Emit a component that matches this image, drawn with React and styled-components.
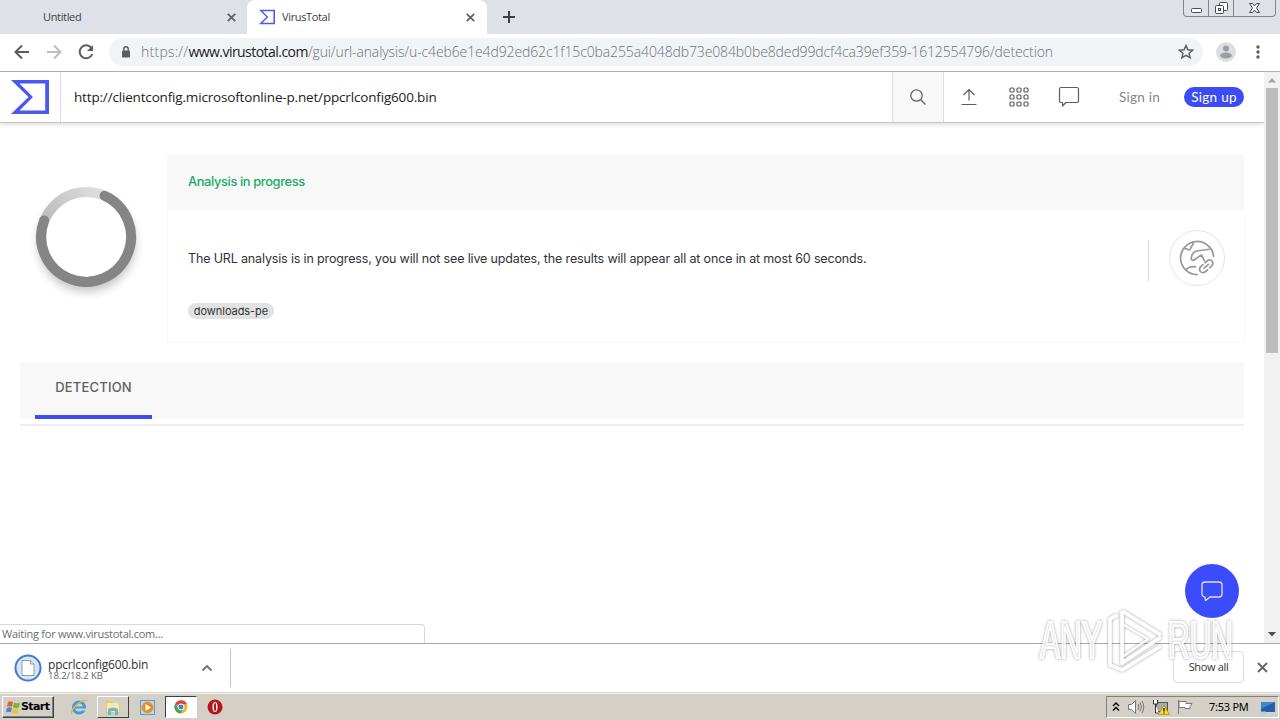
import styled, { createGlobalStyle } from 'styled-components';

const GlobalStyle = createGlobalStyle`
    * { box-sizing: border-box; }
    body {
        margin: 0;
        overflow: hidden;
        background: #fff;
        font-family: 'Open Sans', 'Noto Sans', sans-serif;
    }
    svg { display: block; flex: none; }
`

const Screen = styled.div`
    width: 1280px;
    height: 720px;
    display: flex;
    flex-direction: column;
    position: relative;
    overflow: hidden;
`

const Label = styled.span`
    font-family: ${props => props.$font || "'Open Sans', sans-serif"};
    font-size: ${props => props.$size}px;
    font-weight: ${props => props.$weight || 400};
    letter-spacing: ${props => props.$track || 0}px;
    color: ${props => props.$color || '#333'};
    line-height: ${props => props.$line || 16}px;
    margin-left: ${props => props.$indent || 0}px;
    white-space: pre;
`

/* browser chrome */

const TabStrip = styled.div`
    height: 34px;
    flex: none;
    display: flex;
    background: #dee1e8;
`

const Tab = styled.div`
    display: flex;
    align-items: center;
    width: ${props => props.$width}px;
    padding: 0 ${props => props.$right}px 0 ${props => props.$left}px;
    background: ${props => props.$active ? '#fff' : 'transparent'};
    border-radius: 8px 8px 0 0;

    & > :last-child { margin-left: auto; }
`

const NewTab = styled.div`
    display: flex;
    align-items: center;
    padding-left: 16px;
`

const WindowButtons = styled.div`
    display: flex;
    height: 17px;
    margin-left: auto;
    margin-right: 4px;
    border: 1px solid #80858f;
    border-top: 0;
    border-radius: 0 0 4px 4px;
`

const WindowButton = styled.div`
    width: ${props => props.$width}px;
    display: flex;
    justify-content: center;
    border-left: ${props => props.$first ? '0' : '1px solid #80858f'};
`

const Toolbar = styled.div`
    height: 38px;
    flex: none;
    display: flex;
    align-items: center;
    padding: 0 11px 2px 12px;
    border-bottom: 1px solid #afb1b0;
    background: #fff;
`

const NavButtons = styled.div`
    display: flex;
    gap: 12px;
    width: 97px;
`

const Omnibox = styled.div`
    width: 1094px;
    height: 28px;
    display: flex;
    align-items: center;
    padding: 0 9px 0 11px;
    border-radius: 14px;
    background: #f1f4f7;

    & > :last-child { margin-left: auto; }
`

const Address = styled.div`
    margin-left: 9px;
    padding-bottom: 1px;
    white-space: nowrap;
`

const ToolbarEnd = styled.div`
    display: flex;
    align-items: center;
    gap: 13px;
    margin-left: auto;
`

/* page */

const Viewport = styled.div`
    height: 571px;
    flex: none;
    display: flex;
    position: relative;
`

const Page = styled.div`
    width: 1264px;
    background: #fff;
`

const Header = styled.header`
    height: 51px;
    display: flex;
    align-items: center;
    border-bottom: 1px solid #c6c6c6;
    box-shadow: 0 2px 4px rgba(0, 0, 0, 0.12);
`

const LogoCell = styled.div`
    width: 61px;
    height: 50px;
    padding: 8px 0 0 11px;
    border-right: 1px solid #dedede;
`

const Query = styled.div`
    flex: 1;
    padding: 0 0 2px 13px;
`

const SearchCell = styled.div`
    width: 52px;
    height: 50px;
    display: flex;
    align-items: center;
    justify-content: center;
    background: #f8f8f8;
    border: solid #dedede;
    border-width: 0 1px;
`

const HeaderIcons = styled.div`
    display: flex;
    gap: 26px;
    padding-left: 13px;
`

const Account = styled.div`
    display: flex;
    align-items: center;
    justify-content: space-between;
    width: 126px;
    margin-left: 37px;
    margin-right: 20px;
`

const SignUp = styled.div`
    display: flex;
    align-items: center;
    justify-content: center;
    width: 60px;
    height: 20px;
    border-radius: 10px;
    background: #3b4cf5;
`

const Summary = styled.section`
    display: flex;
    padding: 31px 19px 0 26px;
`

const SpinnerBox = styled.div`
    width: 141px;
    height: 160px;
    padding-top: 23px;
`

const Card = styled.div`
    flex: 1;
    height: 189px;
    border: 1px solid #fafafa;
`

const CardTitle = styled.div`
    height: 56px;
    display: flex;
    align-items: center;
    padding: 0 0 1px 20px;
    margin-top: -1px;
    background: #f8f8f8;
`

const CardBody = styled.div`
    display: flex;
    align-items: center;
    height: 96px;
    padding: 0 19px 0 20px;
`

const CardText = styled.div`
    display: flex;
    padding-top: 2px;
`

const Divider = styled.div`
    width: 1px;
    height: 41px;
    margin: 5px 20px 0 auto;
    background: #dadada;
`

const TypeIcon = styled.div`
    width: 56px;
    height: 56px;
    display: flex;
    align-items: center;
    justify-content: center;
    border: 1px solid #e4e4e4;
    border-radius: 50%;
`

const Tag = styled.div`
    display: flex;
    align-items: center;
    justify-content: center;
    width: 86px;
    height: 16px;
    margin: -3px 0 0 20px;
    border-radius: 8px;
    background: #e2e2e2;
`

const Tabs = styled.div`
    height: 64px;
    margin: 19px 20px 0;
    border-bottom: 2px solid #ededed;
    background: linear-gradient(#f8f8f8 57px, #fff 57px);
`

const DetectionTab = styled.div`
    width: 117px;
    height: 57px;
    margin-left: 15px;
    padding-top: 13px;
    text-align: center;
    border-bottom: 4px solid #3f4bf3;
`

const Scrollbar = styled.div`
    width: 16px;
    display: flex;
    flex-direction: column;
    align-items: center;
    justify-content: space-between;
    padding: 6px 0;
    background: #f1f1f1;
`

const Thumb = styled.div`
    width: 12px;
    height: 265px;
    margin: 5px 0 auto;
    background: #bdbdbd;
`

const ChatButton = styled.div`
    position: absolute;
    right: 41px;
    top: 492px;
    width: 54px;
    height: 54px;
    display: flex;
    align-items: center;
    justify-content: center;
    border-radius: 50%;
    background: #3b4cff;
`

const StatusBubble = styled.div`
    position: absolute;
    left: 0;
    bottom: 0;
    width: 425px;
    height: 19px;
    padding-left: 2px;
    display: flex;
    align-items: center;
    background: #fff;
    border: 1px solid #d8d8d8;
    border-width: 1px 1px 0 0;
    border-radius: 0 4px 0 0;
`

/* download shelf */

const Shelf = styled.div`
    height: 49px;
    flex: none;
    display: flex;
    align-items: center;
    padding-right: 12px;
    border-top: 1px solid #a9a9a9;
    background: #fff;
`

const Download = styled.div`
    width: 231px;
    height: 38px;
    display: flex;
    align-items: center;
    padding: 0 17px 0 14px;
    border-right: 1px solid #c4c4c4;

    & > :last-child { margin-left: auto; }
`

const FileText = styled.div`
    display: flex;
    flex-direction: column;
    margin-left: 6px;
    padding-top: 3px;
`

const ShowAll = styled.div`
    display: flex;
    align-items: center;
    justify-content: center;
    width: 71px;
    height: 32px;
    margin-left: auto;
    margin-right: 13px;
    margin-bottom: 2px;
    border: 1px solid #dadce0;
    border-radius: 4px;
`

const CloseShelf = styled.div`
    padding-bottom: 2px;
`

/* taskbar */

const Taskbar = styled.div`
    height: 28px;
    flex: none;
    display: flex;
    align-items: center;
    padding: 1px 0 0 2px;
    background: #d4d0c8;
    border-top: 1px solid #d4d0c8;
    box-shadow: inset 0 1px #f7f6f3;
`

const Start = styled.div`
    width: 52px;
    height: 22px;
    display: flex;
    align-items: center;
    padding-left: 2px;
    border: 1px solid;
    border-color: #fff #404040 #404040 #fff;
    box-shadow: inset -1px -1px #808080;
`

const TaskButton = styled.div`
    width: 32px;
    height: 22px;
    display: flex;
    align-items: center;
    justify-content: center;
    border: ${props => props.$state ? '1px solid' : '0'};
    border-color: ${props => props.$state === 'pressed' ? '#404040 #fff #fff #404040' : '#fff #404040 #404040 #fff'};
    background: ${props => props.$state === 'pressed' ? '#fff' : 'transparent'};
`

const TaskList = styled.div`
    display: flex;
    gap: 2px;
    margin-left: 9px;
`

const Tray = styled.div`
    height: 22px;
    width: 173px;
    display: flex;
    align-items: center;
    gap: 7px;
    margin-left: auto;
    margin-right: 1px;
    padding: 0 2px 0 5px;
    border: 1px solid;
    border-color: #808080 #fff #fff #808080;

    & > :last-child { margin-left: auto; }
`

const Watermark = styled.div`
    position: absolute;
    left: 1034px;
    top: 604px;
`

const Cross = ({ size = 9, color = '#5f6368', width = 1.8 }) => (
    <svg width={size} height={size} viewBox="0 0 9 9" stroke={color} strokeWidth={width}>
        <path d="M.8.8l7.4 7.4M8.2.8L.8 8.2" />
    </svg>
)

const Sigma = ({ width, height, color }) => (
    <svg width={width} height={height} viewBox="0 0 38 34" fill={color}>
        <path fillRule="evenodd" d="M0 0h38v34H0l17.500-17zM8.500 3.400L22 17 8.500 30.600h25.700V3.400z" />
    </svg>
)

const Spinner = () => (
    <svg width="120" height="130" viewBox="-.5 0 120 130" fill="none">
        <defs>
            <filter id="soft" x="-20%" y="-20%" width="140%" height="140%">
                <feGaussianBlur stdDeviation="5" />
            </filter>
            <linearGradient id="track" gradientUnits="userSpaceOnUse" x1="18" y1="40" x2="70" y2="10">
                <stop offset="0" stopColor="#bdbdbd" />
                <stop offset="1" stopColor="#dedede" />
            </linearGradient>
        </defs>
        <circle cx="60" cy="66" r="49" fill="#000" opacity=".22" filter="url(#soft)" />
        <circle cx="60" cy="60" r="45" fill="#fff" stroke="url(#track)" strokeWidth="10" />
        <path d="M78 18.800A45 45 0 1 1 17.600 43.500" stroke="#858585" strokeWidth="10" strokeLinecap="round" />
    </svg>
)

const GlobeLink = () => (
    <svg width="36" height="36" viewBox="0 0 37 37" fill="none" stroke="#9a9a9a" strokeWidth="1.8" strokeLinecap="round" strokeLinejoin="round">
        <path d="M18.500 35.500A17 17 0 1 1 35.500 16.500" />
        <path d="M5.500 8.500c3 0 3 2 5 1.500s1.500-3 3-4 1-2 .5-3.500M31 9.500l-13 1.800c-3 .6-5.500 4.700-5.500 7.700 0 2 2 2.500 4 .8l6.500-4.500 3 6M7 31c2-3 5-4 10-3.500" />
        <g transform="rotate(-42 28 27)">
            <path d="M26.500 30.500h-3a3.500 3.500 0 0 1 0-7h3M29.500 23.500h3a3.500 3.500 0 0 1 0 7h-3M25 27h6" />
        </g>
    </svg>
)

const AnyRun = () => (
    <svg width="204" height="74" viewBox="0 0 204 74" fill="none" opacity=".9">
        <defs>
            <filter id="glow" x="-10%" y="-10%" width="120%" height="120%">
                <feDropShadow dx="0" dy="0" stdDeviation="1.8" floodColor="#666" floodOpacity=".75" />
            </filter>
        </defs>
        <g filter="url(#glow)">
            <g fontFamily="Liberation Sans, sans-serif" fontSize="51" fill="#fff" fillOpacity=".6" stroke="#fff" strokeWidth="2.200">
                <text x="6" y="54" textLength="62" lengthAdjust="spacingAndGlyphs">ANY</text>
                <text x="134" y="54" textLength="65" lengthAdjust="spacingAndGlyphs">RUN</text>
            </g>
            <g stroke="#fff" strokeWidth="3.500" strokeLinejoin="round">
                <path d="M88 7l39 24M88 7v52l39-26" />
                <path d="M88 20l26 15-26 18z" strokeWidth="2" />
                <path d="M83 11l-7 4v46l12 5 39-24" />
            </g>
        </g>
    </svg>
)

export default function App() {
    return (
        <>
            <GlobalStyle />
            <Screen>
                <TabStrip>
                    <Tab $width={247} $left={43} $right={11}>
                        <Label $size={11} $track={-0.35} $color="#3c4043">Untitled</Label>
                        <Cross />
                    </Tab>
                    <Tab $width={240} $left={12} $right={12} $active>
                        <Sigma width={16} height={16} color="#4d5bea" />
                        <Label $size={11} $track={-0.35} $indent={7} $color="#3c4043">VirusTotal</Label>
                        <Cross />
                    </Tab>
                    <NewTab>
                        <svg width="12" height="12" stroke="#3c4043" strokeWidth="2"><path d="M6 0v12M0 6h12" /></svg>
                    </NewTab>
                    <WindowButtons>
                        <WindowButton $width={24} $first>
                            <svg width="13" height="16" fill="#fff" stroke="#454b56"><rect x="1.500" y="8.500" width="10" height="4" rx="1" /></svg>
                        </WindowButton>
                        <WindowButton $width={25}>
                            <svg width="13" height="16" fill="#fff" stroke="#454b56">
                                <rect x="4.500" y="2.500" width="8" height="8" rx="1" />
                                <rect x=".5" y="5.500" width="8" height="8" rx="1" />
                                <rect x="3.500" y="8.500" width="2" height="2" />
                            </svg>
                        </WindowButton>
                        <WindowButton $width={42}>
                            <svg width="13" height="16" viewBox="0 0 13 16" fill="#fff" stroke="#454b56">
                                <path d="M1.500 3.500h3l2 2.500 2-2.500h3L8.500 8l3 4.500h-3l-2-2.500-2 2.500h-3l3-4.500z" />
                            </svg>
                        </WindowButton>
                    </WindowButtons>
                </TabStrip>

                <Toolbar>
                    <NavButtons>
                        <svg width="20" height="20" fill="none" stroke="#5a5e62" strokeWidth="2"><path d="M17 10H4.500M10 3.500L3.500 10l6.500 6.500" /></svg>
                        <svg width="20" height="20" fill="none" stroke="#bdbdbd" strokeWidth="2"><path d="M3 10h12.500M10 3.500l6.500 6.500-6.500 6.500" /></svg>
                        <svg width="20" height="20" fill="none" stroke="#5a5e62" strokeWidth="2">
                            <path d="M15.500 6A6.500 6.500 0 1 0 16.300 12" />
                            <path d="M17 3v6h-6z" fill="#5a5e62" stroke="none" />
                        </svg>
                    </NavButtons>
                    <Omnibox>
                        <svg width="12" height="14" fill="none">
                            <rect x="2" y="5.500" width="8" height="7" rx="1" fill="#5a5e62" />
                            <path d="M3.800 6V4a2.200 2.200 0 0 1 4.400 0v2" stroke="#5a5e62" strokeWidth="1.400" />
                        </svg>
                        <Address>
                            <Label $size={14} $weight={300} $track={0.25} $color="#6c7277">https://</Label>
                            <Label $size={14} $track={-0.54} $color="#202124">www.virustotal.com</Label>
                            <Label $size={14} $weight={300} $track={-0.12} $color="#6c7277">/gui/url-analysis/u-c4eb6e1e4d92ed62c1f15c0ba255a4048db73e084b0be8ded99dcf4ca39ef359-1612554796/detection</Label>
                        </Address>
                        <svg width="16" height="16" viewBox="0 0 16 16" fill="none" stroke="#5a5e62" strokeWidth="1.500">
                            <path d="M8 1.500l1.900 4.300 4.700.4-3.500 3.100 1 4.500L8 11.400l-4.100 2.400 1-4.500-3.500-3.100 4.700-.4z" />
                        </svg>
                    </Omnibox>
                    <ToolbarEnd>
                        <svg width="20" height="20">
                            <circle cx="10" cy="10" r="10" fill="#dcdee1" />
                            <circle cx="10" cy="6.500" r="3" fill="#9a9da1" />
                            <ellipse cx="10" cy="13.500" rx="5.800" ry="3" fill="#9a9da1" />
                        </svg>
                        <svg width="20" height="16" fill="#5a5e62">
                            <circle cx="9" cy="3" r="1.700" /><circle cx="9" cy="8" r="1.700" /><circle cx="9" cy="13" r="1.700" />
                        </svg>
                    </ToolbarEnd>
                </Toolbar>

                <Viewport>
                    <Page>
                        <Header>
                            <LogoCell><Sigma width={38} height={34} color="#4958ee" /></LogoCell>
                            <Query><Label $size={13.5} $track={-0.17} $color="#222">http://clientconfig.microsoftonline-p.net/ppcrlconfig600.bin</Label></Query>
                            <SearchCell>
                                <svg width="16" height="16" fill="none" stroke="#666" strokeWidth="1.300"><circle cx="6.500" cy="6.500" r="5.700" /><path d="M10.700 10.700l4.800 4.800" /></svg>
                            </SearchCell>
                            <HeaderIcons>
                                <svg width="24" height="24" fill="none" stroke="#5e5e5e" strokeWidth="1.200"><path d="M12 15.500V5M6.500 10L12 4.500l5.500 5.500M4.500 19.500h15" /></svg>
                                <svg width="24" height="24" fill="none" stroke="#5e5e5e" strokeWidth="1.200">
                                    {[3.5, 10.5, 17.5].map(y => [3.5, 10.5, 17.5].map(x => (
                                        <rect key={`${x}-${y}`} x={x - 0.5} y={y - 0.5} width="4" height="4" rx="1" />
                                    )))}
                                </svg>
                                <svg width="24" height="24" fill="none" stroke="#5e5e5e" strokeWidth="1.200" strokeLinejoin="round">
                                    <path d="M4 2.500h16a1.500 1.500 0 0 1 1.500 1.500v12a1.500 1.500 0 0 1-1.500 1.500H9L5.500 21v-3.500H4A1.500 1.500 0 0 1 2.500 16V4A1.500 1.500 0 0 1 4 2.500z" />
                                </svg>
                            </HeaderIcons>
                            <Account>
                                <Label $font="Lato, sans-serif" $size={13.5} $track={0.25} $indent={1} $color="#858585">Sign in</Label>
                                <SignUp><Label $font="Lato, sans-serif" $size={13.5} $track={0.3} $color="#fff">Sign up</Label></SignUp>
                            </Account>
                        </Header>

                        <Summary>
                            <SpinnerBox><Spinner /></SpinnerBox>
                            <Card>
                                <CardTitle>
                                    <Label $font="Inter, sans-serif" $size={12.8} $weight={500} $track={-0.35} $color="#20a86b">Analysis in progress</Label>
                                </CardTitle>
                                <CardBody>
                                    <CardText>
                                        <Label $font="Inter, sans-serif" $size={12.5} $track={-0.15} $color="#333">The URL analysis is in progress, you will not see live updates, the results will appear all at once in at most 60 seconds.</Label>
                                    </CardText>
                                    <Divider />
                                    <TypeIcon><GlobeLink /></TypeIcon>
                                </CardBody>
                                <Tag><Label $font="Inter, sans-serif" $size={11} $track={-0.05} $color="#333">downloads-pe</Label></Tag>
                            </Card>
                        </Summary>

                        <Tabs>
                            <DetectionTab>
                                <Label $font="Inter, sans-serif" $size={13} $weight={500} $track={0.2} $color="#606060">DETECTION</Label>
                            </DetectionTab>
                        </Tabs>
                    </Page>
                    <Scrollbar>
                        <svg width="8" height="5" fill="#a3a3a3"><path d="M4 0l4 4.500H0z" /></svg>
                        <Thumb />
                        <svg width="8" height="5" fill="#505050"><path d="M0 0h8L4 4.500z" /></svg>
                    </Scrollbar>
                    <ChatButton>
                        <svg width="22" height="20" fill="none" stroke="#dfe3ff" strokeWidth="1.300" strokeLinejoin="round">
                            <path d="M4 1h14a3 3 0 0 1 3 3v9a3 3 0 0 1-3 3H9l-4.500 3.500L4 16a3 3 0 0 1-3-3V4a3 3 0 0 1 3-3z" />
                        </svg>
                    </ChatButton>
                    <StatusBubble>
                        <Label $size={11} $track={-0.25} $color="#6a6e72">Waiting for www.virustotal.com...</Label>
                    </StatusBubble>
                </Viewport>

                <Shelf>
                    <Download>
                        <svg width="28" height="28">
                            <circle cx="14" cy="14" r="12.500" fill="#d7e5f8" stroke="#4179cf" strokeWidth="2" />
                            <path d="M8 6.500h8.500L20 10v11.500H8z" fill="#fff" stroke="#9b9b9b" />
                            <path d="M16.500 6.500V10H20" fill="#eee" stroke="#9b9b9b" />
                        </svg>
                        <FileText>
                            <Label $size={12} $track={-0.2} $line={12} $color="#333">ppcrlconfig600.bin</Label>
                            <Label $size={9.5} $track={-0.05} $line={10} $color="#5f6368">18.2/18.2 KB</Label>
                        </FileText>
                        <svg width="12" height="8" fill="none" stroke="#6c7074" strokeWidth="1.800"><path d="M1.500 6.500L6 2l4.500 4.500" /></svg>
                    </Download>
                    <ShowAll><Label $size={11} $track={-0.35} $color="#333">Show all</Label></ShowAll>
                    <CloseShelf><Cross size={11} color="#666" width={1.6} /></CloseShelf>
                </Shelf>

                <Taskbar>
                    <Start>
                        <svg width="16" height="16" viewBox="0 0 16 16">
                            <path d="M3 3q2.500-1.500 5 0L7 8q-2.500-1.500-5 0z" fill="#e8612c" />
                            <path d="M9 3.500q2.500 1.500 6 0l-1 5q-3 1.500-6 0z" fill="#75b644" />
                            <path d="M2 9q2.500-1.500 5 0l-1 4.500Q3.500 12 1 13.500z" fill="#3f8bd4" />
                            <path d="M8 9.500q2.500 1.500 5.500 0l-1 4.500q-3 1.500-5.500 0z" fill="#f4c12d" />
                        </svg>
                        <Label $font="'DejaVu Sans', sans-serif" $size={11} $weight={700} $track={-0.6} $color="#000">Start</Label>
                    </Start>
                    <TaskList>
                        <TaskButton>
                            <svg width="18" height="18" fill="none">
                                <circle cx="9" cy="9.500" r="5.500" stroke="#3a9edb" strokeWidth="3" />
                                <path d="M4 9.500h10" stroke="#3a9edb" strokeWidth="2" />
                                <path d="M11 11.500h5" stroke="#d4d0c8" strokeWidth="2" />
                                <path d="M2 16C-1 13 11 1 16.500 2.500" stroke="#e8b53a" strokeWidth="1.400" />
                            </svg>
                        </TaskButton>
                        <TaskButton $state="raised">
                            <svg width="18" height="18">
                                <path d="M2 3h6l1 2h7v11H2z" fill="#eacb67" />
                                <path d="M3 5h12v9H3z" fill="#f9e9a9" />
                                <path d="M4 17v-6q5-3 10 0v6h-3v-4H7v4z" fill="#65b7e1" />
                            </svg>
                        </TaskButton>
                        <TaskButton>
                            <svg width="17" height="17">
                                <rect x="1.500" y="1.500" width="14" height="14" fill="#b8d8ef" stroke="#5b9bce" />
                                <circle cx="8.500" cy="8.500" r="5.800" fill="#f18b17" />
                                <path d="M6.500 5v7l5.500-3.500z" fill="#fff" />
                            </svg>
                        </TaskButton>
                        <TaskButton $state="pressed">
                            <svg width="14" height="14" viewBox="0 0 14 14">
                                <circle cx="7" cy="7" r="6.500" fill="#e8bd27" />
                                <path d="M7 7L1.200 3.700A6.500 6.500 0 0 1 13 4.200H7z" fill="#dd4738" />
                                <path d="M1.200 3.700A6.500 6.500 0 0 0 6.500 13.500L9.500 8.500 4.500 8z" fill="#43a258" />
                                <circle cx="7" cy="7" r="3" fill="#3b82e0" stroke="#fff" />
                            </svg>
                        </TaskButton>
                        <TaskButton>
                            <svg width="16" height="16">
                                <ellipse cx="8" cy="8" rx="7.500" ry="7.500" fill="#b91519" />
                                <ellipse cx="8" cy="8" rx="2.500" ry="5" fill="#fff" />
                                <ellipse cx="8" cy="8" rx="1.100" ry="4.300" fill="#b91519" />
                            </svg>
                        </TaskButton>
                    </TaskList>
                    <Tray>
                        <svg width="8" height="12" fill="none" stroke="#000" strokeWidth="1.400"><path d="M1 5l3-3 3 3M1 9.500l3-3 3 3" /></svg>
                        <svg width="18" height="16" fill="none" stroke="#777">
                            <path d="M1.500 5.500h3l4-4v13l-4-4h-3z" fill="#fff" />
                            <path d="M11 5q2 3 0 6M13 3.500q3 4.500 0 9M15 2q3.500 6 0 12" />
                        </svg>
                        <svg width="18" height="16">
                            <rect x="4.500" y="3.500" width="11" height="9" fill="#aaa" stroke="#555" />
                            <path d="M1.500 1v4h4V1M3.500 5v9h3" fill="#fff" stroke="#333" />
                            <path d="M12 6l5.500 9.500h-11z" fill="#ffd92e" stroke="#a48516" strokeWidth=".7" />
                            <path d="M12 9v3.500M12 13.500v1" stroke="#000" strokeWidth="1.200" />
                        </svg>
                        <svg width="17" height="16" fill="#fff" stroke="#777"><path d="M1.500 1v14M2 2.500h7v2h6l-2 3 0 2H8v-1H2z" /></svg>
                        <Label $size={11} $font="'Noto Sans', sans-serif" $track={-0.25} $indent={8} $color="#000">7:53 PM</Label>
                        <svg width="16" height="14"><path d="M1 2h14v10H1z" fill="#235eaa" /><path d="M1 2h14L1 9z" fill="#3987cd" /><path d="M1 12.500h5" stroke="#a9d0f0" strokeWidth="2" /></svg>
                    </Tray>
                </Taskbar>
                <Watermark><AnyRun /></Watermark>
            </Screen>
        </>
    )
}
